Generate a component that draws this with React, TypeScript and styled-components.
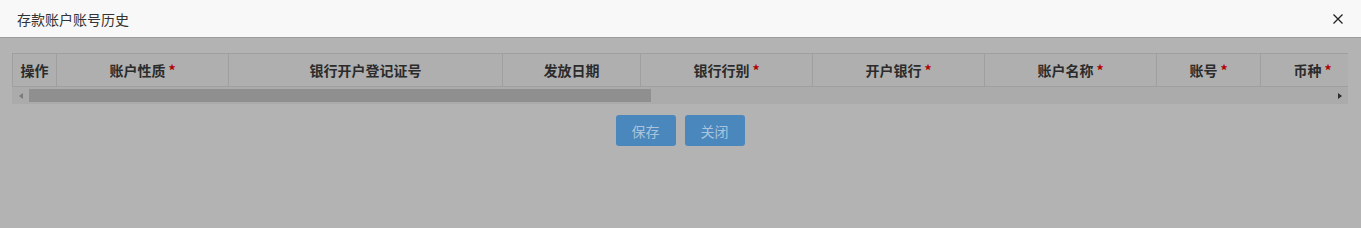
import React from 'react'
import styled, { createGlobalStyle } from 'styled-components'

const GlobalStyle = createGlobalStyle`
  html, body {
    margin: 0;
    padding: 0;
    background: #b3b3b3;
    font-family: "Noto Sans CJK SC", "Liberation Sans", sans-serif;
  }
`

type Column = { title: string; width: number; required?: boolean }

const columns: Column[] = [
  { title: '操作', width: 44 },
  { title: '账户性质', width: 172, required: true },
  { title: '银行开户登记证号', width: 274 },
  { title: '发放日期', width: 138 },
  { title: '银行行别', width: 172, required: true },
  { title: '开户银行', width: 172, required: true },
  { title: '账户名称', width: 172, required: true },
  { title: '账号', width: 104, required: true },
  { title: '币种', width: 104, required: true },
]

const App: React.FC = () => {
  return (
    <>
      <GlobalStyle />
      <Dialog>
        <TitleBar>
          <Title>存款账户账号历史</Title>
          <CloseButton aria-label="close">
            <svg width="12" height="12" viewBox="0 0 12 12">
              <path d="M1.5 1.5L10.5 10.5M10.5 1.5L1.5 10.5" stroke="#222" strokeWidth="1.3" />
            </svg>
          </CloseButton>
        </TitleBar>
        <Body>
          <Grid>
            <HeaderRow>
              {columns.map((c) => (
                <HeadCell key={c.title} $width={c.width}>
                  {c.title}
                  {c.required && <Star>*</Star>}
                </HeadCell>
              ))}
            </HeaderRow>
            <ScrollBar>
              <Arrow $dir="left" />
              <Track>
                <Thumb />
              </Track>
              <Arrow $dir="right" />
            </ScrollBar>
          </Grid>
          <Actions>
            <Button>保存</Button>
            <Button>关闭</Button>
          </Actions>
        </Body>
      </Dialog>
    </>
  )
}

const Dialog = styled.div`
  width: 1361px;
  height: 228px;
  display: flex;
  flex-direction: column;
  overflow: hidden;
`
const TitleBar = styled.div`
  height: 37px;
  background: #f8f8f8;
  border-bottom: 1px solid #9c9c9c;
  display: flex;
  align-items: center;
  justify-content: space-between;
  padding: 0 17px 0 17px;
`
const Title = styled.span`
  font-size: 14px;
  color: #333;
`
const CloseButton = styled.span`
  display: flex;
  width: 12px;
  height: 12px;
  margin-top: 1px;
`
const Body = styled.div`
  flex: 1;
  background: #b3b3b3;
  padding: 15px 13px 0 12px;
  display: flex;
  flex-direction: column;
`
const Grid = styled.div`
  width: 1336px;
  overflow: hidden;
  display: flex;
  flex-direction: column;
`
const HeaderRow = styled.div`
  display: flex;
  height: 34px;
  border-top: 1px solid #9f9f9f;
  border-bottom: 1px solid #9f9f9f;
  background: #afafaf;
  box-sizing: border-box;
`
const HeadCell = styled.div<{ $width: number }>`
  flex: 0 0 ${(p) => p.$width}px;
  box-sizing: border-box;
  border-left: 1px solid #9f9f9f;
  display: flex;
  align-items: center;
  justify-content: center;
  font-size: 14px;
  font-weight: bold;
  color: #2b2b2b;
`
const Star = styled.span`
  color: #b00000;
  margin-left: 3px;
  font-weight: bold;
`
const ScrollBar = styled.div`
  display: flex;
  height: 17px;
  background: #ababab;
  align-items: center;
`
const Arrow = styled.div<{ $dir: 'left' | 'right' }>`
  flex: 0 0 17px;
  height: 17px;
  display: flex;
  align-items: center;
  justify-content: center;
  &::before {
    content: '';
    border-top: 3.5px solid transparent;
    border-bottom: 3.5px solid transparent;
    ${(p) =>
      p.$dir === 'left'
        ? 'border-right: 4px solid #7a7a7a;'
        : 'border-left: 4px solid #2e2e2e;'}
  }
`
const Track = styled.div`
  flex: 1;
  height: 13px;
  display: flex;
`
const Thumb = styled.div`
  width: 622px;
  height: 13px;
  background: #8f8f8f;
`
const Actions = styled.div`
  display: flex;
  justify-content: center;
  gap: 9px;
  margin-top: 11px;
`
const Button = styled.button`
  width: 60px;
  height: 31px;
  border: none;
  border-radius: 3px;
  background: #4a87bd;
  color: #a9c4dc;
  font-family: inherit;
  font-size: 14px;
  padding: 0;
`

export default App
